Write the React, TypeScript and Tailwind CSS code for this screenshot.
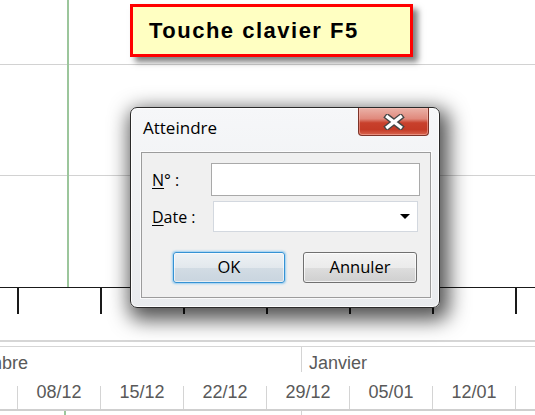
import React from "react";

const weeks = ["08/12", "15/12", "22/12", "29/12", "05/01", "12/01", "19/01"];

export default function App() {
  return (
    <div className="relative w-[535px] h-[415px] overflow-hidden bg-white font-['Liberation_Sans',Arial,sans-serif]">
      {/* chart area */}
      <div className="relative h-[287px]">
        <div className="h-[65px] border-b border-[#d2d2d2]" />
        <div className="h-[111px] border-b border-[#d2d2d2]" />
        <div className="absolute left-[67px] top-0 bottom-0 w-[2px] bg-[#9cc69c]" />
      </div>

      {/* axis with ticks */}
      <div className="flex h-[27px] border-t border-[#1a1a1a]">
        <div className="w-[17px] shrink-0" />
        {weeks.map((w) => (
          <div key={w} className="w-[83px] shrink-0 border-l-2 border-[#1a1a1a]" />
        ))}
      </div>

      <div className="h-[26px]" />

      {/* header double line */}
      <div className="h-[7px] border-t-2 border-b border-[#d6d6d6]" />

      {/* month row */}
      <div className="flex h-[25px] text-[18px] leading-[20px] text-[#595959]">
        <div className="w-[301px] shrink-0 overflow-hidden whitespace-nowrap pt-[6px]">
          <span className="ml-[-55px]">Décembre</span>
        </div>
        <div className="flex-1 border-l border-[#d4d4d4] pl-[7px] pt-[6px]">Janvier</div>
      </div>

      <div className="h-[14px]" />

      {/* week row */}
      <div className="flex h-[25px] border-b-2 border-[#cfcfcf] text-[18px] leading-[20px] text-[#595959]">
        <div className="w-[17px] shrink-0" />
        {weeks.map((w) => (
          <div key={w} className="w-[83px] shrink-0 border-l border-[#d4d4d4] text-center whitespace-nowrap">
            <span className="block -mt-[4px]">{w}</span>
          </div>
        ))}
      </div>

      {/* bottom strip */}
      <div className="flex h-[4px]">
        <div className="w-[64px] shrink-0" />
        <div className="w-[2px] shrink-0 bg-[#9cc69c]" />
        <div className="w-[235px] shrink-0" />
        <div className="w-[1px] shrink-0 bg-[#d4d4d4]" />
      </div>

      {/* callout */}
      <div className="absolute left-[130px] top-[4px] w-[283px] h-[53px] border-[3px] border-[#ff0000] bg-[#ffffc2] shadow-[5px_5px_6px_rgba(0,0,0,0.5)] flex items-center pl-[16px]">
        <span className="font-bold text-[22px] leading-[26px] tracking-[1.5px] text-black">Touche clavier F5</span>
      </div>

      {/* dialog */}
      <div className="absolute left-[130px] top-[107px] w-[310px] h-[201px] rounded-[7px] border border-[#2a2a2a] bg-[linear-gradient(180deg,#f6f7f9_0%,#eef0f2_60%,#e9ebee_100%)] shadow-[inset_0_0_0_1px_rgba(255,255,255,0.85),4px_7px_20px_5px_rgba(0,0,0,0.68)] flex flex-col font-['Open_Sans',sans-serif]">
        <div className="flex h-[44px] justify-between">
          <div className="pl-[12px] pt-[10px] text-[17px] leading-[20px] text-black">Atteindre</div>
          <div className="mr-[10px] w-[71px] h-[28px] rounded-b-[4px] border border-t-0 border-[#7d3328] bg-[linear-gradient(180deg,#eab2a8_0%,#e0897c_40%,#c8402c_55%,#c43a26_80%,#d9664f_100%)] shadow-[inset_0_0_0_1px_rgba(255,200,190,0.45)] flex items-center justify-center">
            <svg width="22" height="16" viewBox="0 0 22 16">
              <path d="M4.5 3 L17.5 13 M17.5 3 L4.5 13" stroke="#454545" strokeWidth="6" strokeLinecap="square" fill="none" />
              <path d="M4.5 3 L17.5 13 M17.5 3 L4.5 13" stroke="#ffffff" strokeWidth="3.4" strokeLinecap="square" fill="none" />
            </svg>
          </div>
        </div>

        <div className="ml-[10px] w-[290px] h-[146px] border border-[#9c9c9c] bg-[#f0f0f0] shadow-[0_0_0_1px_rgba(255,255,255,0.7)] flex flex-col pt-[10px] pl-[10px] text-[16px] text-black">
          <div className="flex items-center h-[33px]">
            <div className="w-[59px]">
              <span className="underline underline-offset-2">N</span>° :
            </div>
            <div className="w-[209px] h-[33px] border border-[#a9a9a9] bg-white" />
          </div>
          <div className="flex items-center h-[31px] mt-[5px]">
            <div className="w-[61px]">
              <span className="underline underline-offset-2">D</span>ate :
            </div>
            <div className="w-[205px] h-[31px] border border-[#d3d8df] bg-white flex items-center justify-end pr-[7px]">
              <svg width="10" height="5" viewBox="0 0 10 5">
                <path d="M0 0 L10 0 L5 5 Z" fill="#000" />
              </svg>
            </div>
          </div>
          <div className="flex mt-[20px] pl-[21px] gap-[18px] text-[16.5px]">
            <div className="w-[112px] h-[31px] rounded-[3px] border border-[#3592d4] bg-[linear-gradient(180deg,#eef2f5_0%,#e2e8ed_50%,#d2dce4_52%,#c9d5df_100%)] shadow-[inset_0_0_0_1px_rgba(255,255,255,0.6),0_0_2px_1px_rgba(90,180,240,0.6)] flex items-center justify-center">
              OK
            </div>
            <div className="w-[114px] h-[31px] rounded-[3px] border border-[#707070] bg-[linear-gradient(180deg,#f3f3f3_0%,#ebebeb_50%,#dddddd_52%,#cfcfcf_100%)] shadow-[inset_0_0_0_1px_rgba(255,255,255,0.7)] flex items-center justify-center">
              Annuler
            </div>
          </div>
        </div>
      </div>
    </div>
  );
}
